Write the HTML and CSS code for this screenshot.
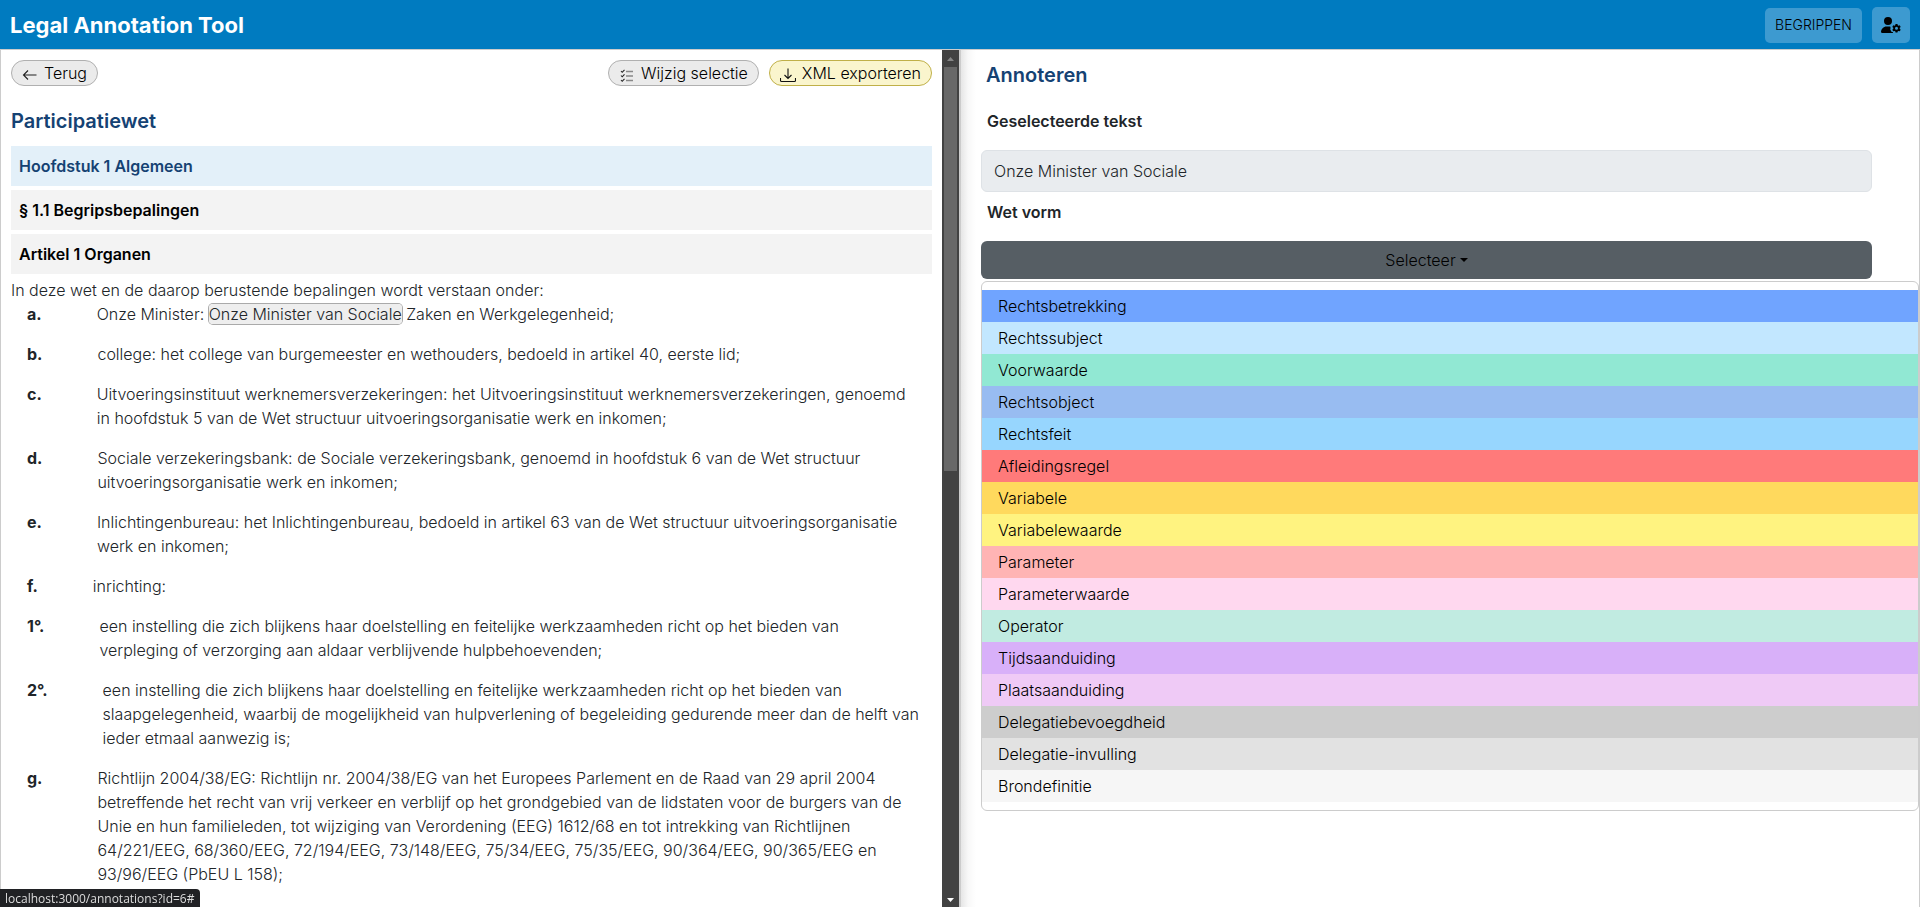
FILE: index.html
```html
<!DOCTYPE html>
<html lang="nl">
<head>
<meta charset="utf-8">
<meta name="viewport" content="width=device-width, initial-scale=1">
<title>Legal Annotation Tool</title>
<link rel="stylesheet" href="styles.css">
</head>
<body>
<header class="topbar">
  <h1 class="brand">Legal Annotation Tool</h1>
  <nav class="topbar-actions">
    <button type="button" class="nav-button nav-button-text">BEGRIPPEN</button>
    <button type="button" class="nav-button nav-button-icon" aria-label="Gebruikersinstellingen">
      <svg width="20" height="16" viewBox="0 0 640 512" aria-hidden="true">
        <path d="M224 0a128 128 0 1 1 0 256A128 128 0 1 1 224 0zM178 304h92c9 0 18 .7 27 2-2 10-1 20 4 29l10 17c-14 12-20 32-14 50 8 24 20 45 38 66 12 14 30 19 46 13v28c0 1 0 2 0 3H30c-17 0-30-13-30-30C0 384 80 304 178 304z"/>
        <path fill-rule="evenodd" d="M466 222h60l11 42 20 12 43-12 30 52-31 31v26l31 31-30 52-43-12-20 12-11 43h-60l-11-43-20-12-43 12-30-52 31-31v-26l-31-31 30-52 43 12 20-12zM496 312a48 48 0 1 0 0 96 48 48 0 1 0 0-96z"/>
      </svg>
    </button>
  </nav>
</header>
<div class="workspace">
  <section class="pane pane-law">
    <div class="law-content">
      <div class="toolbar">
        <button type="button" class="pill">
          <svg width="16" height="16" viewBox="0 0 16 16" aria-hidden="true"><path d="M14.500 8H1.500M6 3.500L1.500 8 6 12.500" fill="none" stroke="#222" stroke-width="1.100"/></svg>
          <span>Terug</span>
        </button>
        <div class="toolbar-end">
          <button type="button" class="pill">
            <svg width="16" height="16" viewBox="0 0 16 16" aria-hidden="true"><path d="M7 4.500h7M7 9h7M7 13.500h7" fill="none" stroke="#888" stroke-width="1.300"/><path d="M2 4l1.200 1.300L5.500 2.800M2 8.500l1.200 1.300 2.300-2.500M2 13l1.200 1.300 2.300-2.500" fill="none" stroke="#222" stroke-width="1.100"/></svg>
            <span>Wijzig selectie</span>
          </button>
          <button type="button" class="pill pill-export">
            <svg width="16" height="16" viewBox="0 0 16 16" aria-hidden="true"><path d="M.5 11v2.500q0 1 1 1h13q1 0 1-1V11M8 1.500v10M4.500 8L8 11.500 11.500 8" fill="none" stroke="#111" stroke-width="1.100"/></svg>
            <span>XML exporteren</span>
          </button>
        </div>
      </div>
      <h2 class="title">Participatiewet</h2>
      <h3 class="bar bar-chapter">Hoofdstuk 1 Algemeen</h3>
      <h3 class="bar">§ 1.1 Begripsbepalingen</h3>
      <h3 class="bar">Artikel 1 Organen</h3>
      <p class="intro">In deze wet en de daarop berustende bepalingen wordt verstaan onder:</p>
      <ul class="items">
        <li><b>a.</b><span>Onze Minister: <mark>Onze Minister van Sociale</mark> Zaken en Werkgelegenheid;</span></li>
        <li><b>b.</b><span>college: het college van burgemeester en wethouders, bedoeld in artikel 40, eerste lid;</span></li>
        <li><b>c.</b><span>Uitvoeringsinstituut werknemersverzekeringen: het Uitvoeringsinstituut werknemersverzekeringen, genoemd in hoofdstuk 5 van de Wet structuur uitvoeringsorganisatie werk en inkomen;</span></li>
        <li><b>d.</b><span>Sociale verzekeringsbank: de Sociale verzekeringsbank, genoemd in hoofdstuk 6 van de Wet structuur uitvoeringsorganisatie werk en inkomen;</span></li>
        <li><b>e.</b><span>Inlichtingenbureau: het Inlichtingenbureau, bedoeld in artikel 63 van de Wet structuur uitvoeringsorganisatie werk en inkomen;</span></li>
        <li><b>f.</b><span>inrichting:</span></li>
        <li><b>1°.</b><span>een instelling die zich blijkens haar doelstelling en feitelijke werkzaamheden richt op het bieden van verpleging of verzorging aan aldaar verblijvende hulpbehoevenden;</span></li>
        <li><b>2°.</b><span>een instelling die zich blijkens haar doelstelling en feitelijke werkzaamheden richt op het bieden van slaapgelegenheid, waarbij de mogelijkheid van hulpverlening of begeleiding gedurende meer dan de helft van ieder etmaal aanwezig is;</span></li>
        <li><b>g.</b><span>Richtlijn 2004/38/EG: Richtlijn nr. 2004/38/EG van het Europees Parlement en de Raad van 29 april 2004 betreffende het recht van vrij verkeer en verblijf op het grondgebied van de lidstaten voor de burgers van de Unie en hun familieleden, tot wijziging van Verordening (EEG) 1612/68 en tot intrekking van Richtlijnen 64/221/EEG, 68/360/EEG, 72/194/EEG, 73/148/EEG, 75/34/EEG, 75/35/EEG, 90/364/EEG, 90/365/EEG en 93/96/EEG (PbEU L 158);</span></li>
      </ul>
    </div>
    <div class="scrollbar" aria-hidden="true">
      <span class="arrow arrow-up"></span>
      <div class="track"><div class="thumb"></div></div>
      <span class="arrow arrow-down"></span>
    </div>
  </section>
  <section class="pane pane-annotate">
    <h2 class="title">Annoteren</h2>
    <label class="field-label" for="selected">Geselecteerde tekst</label>
    <input class="field" id="selected" type="text" value="Onze Minister van Sociale" readonly>
    <span class="field-label" id="form-label">Wet vorm</span>
    <div class="dropdown">
      <button type="button" class="toggle" aria-expanded="true" aria-describedby="form-label">Selecteer<span class="caret"></span></button>
      <div class="menu">
        <a href="#" class="c-betrekking">Rechtsbetrekking</a>
        <a href="#" class="c-subject">Rechtssubject</a>
        <a href="#" class="c-voorwaarde">Voorwaarde</a>
        <a href="#" class="c-object">Rechtsobject</a>
        <a href="#" class="c-feit">Rechtsfeit</a>
        <a href="#" class="c-afleiding">Afleidingsregel</a>
        <a href="#" class="c-variabele">Variabele</a>
        <a href="#" class="c-variabelewaarde">Variabelewaarde</a>
        <a href="#" class="c-parameter">Parameter</a>
        <a href="#" class="c-parameterwaarde">Parameterwaarde</a>
        <a href="#" class="c-operator">Operator</a>
        <a href="#" class="c-tijd">Tijdsaanduiding</a>
        <a href="#" class="c-plaats">Plaatsaanduiding</a>
        <a href="#" class="c-bevoegdheid">Delegatiebevoegdheid</a>
        <a href="#" class="c-invulling">Delegatie-invulling</a>
        <a href="#" class="c-bron">Brondefinitie</a>
      </div>
    </div>
  </section>
</div>
<div class="status">localhost:3000/annotations?id=6#</div>
</body>
</html>
```
FILE: styles.css
```css
* { box-sizing: border-box; }
body {
  margin: 0;
  height: 100vh;
  display: flex;
  flex-direction: column;
  overflow: hidden;
  font: 300 16px/24px Inter, sans-serif;
  color: #212529;
  background: #fff;
}
h1, h2, h3, p, ul { margin: 0; padding: 0; }
button, input { font: inherit; color: inherit; }
.topbar {
  display: flex;
  align-items: center;
  justify-content: space-between;
  padding: 7px 10px 6px;
  background: #007bc0;
}
.brand { font-size: 22px; font-weight: 700; color: #fff; }
.topbar-actions { display: flex; align-items: center; gap: 10px; }
.nav-button {
  display: flex;
  align-items: center;
  border: 0;
  border-radius: 5px;
  padding: 0 10px;
  background: #3d9ad0;
  color: #000;
}
.nav-button-text { height: 35px; font-size: 14px; }
.nav-button-icon { height: 36px; width: 38px; padding: 0 9px; }
.workspace { flex: 1; min-height: 0; display: grid; grid-template-columns: 1fr 1fr; }
.pane { min-width: 0; min-height: 0; border: 1px solid #ccc; border-bottom: 0; }
.pane-law { display: flex; overflow: hidden; }
.law-content { flex: 1; min-width: 0; padding: 10px; }
.toolbar, .toolbar-end { display: flex; justify-content: space-between; gap: 10px; }
.pill {
  display: flex;
  align-items: center;
  gap: 6px;
  height: 26px;
  padding: 0 10px;
  border: 1px solid #b0b0b0;
  border-radius: 13px;
  background: #ebebeb;
  color: #000;
}
.pill svg { margin-top: 3px; }
.pill-export { border-color: #c0b048; background: #faf5cd; }
.title { font-size: 20px; font-weight: 600; color: #154273; }
.law-content .title { margin: 23px 0 13px; }
.bar {
  margin-bottom: 4px;
  padding: 8px;
  font-size: 16px;
  font-weight: 600;
  color: #000;
  background: #f3f3f3;
}
.bar-chapter { color: #154273; background: #e3f0f9; }
.items { list-style: none; padding: 0 10px 0 16px; }
.items li { display: flex; gap: 55px; margin-bottom: 16px; }
.items b { font-weight: 700; }
mark { color: inherit; background: #eee; border-radius: 4px; box-shadow: 0 0 0 1px #aaa; }
.scrollbar {
  width: 17px;
  display: flex;
  flex-direction: column;
  align-items: center;
  justify-content: space-between;
  background: #424242;
}
.track { flex: 1; width: 13px; }
.thumb { height: 49%; background: #686868; }
.arrow { width: 7px; height: 4px; margin: 7px 0 6px; }
.arrow-up { background: #868686; clip-path: polygon(50% 0, 100% 100%, 0 100%); }
.arrow-down { background: #fff; clip-path: polygon(0 0, 100% 0, 50% 100%); margin: 6px 0 5px; }
.pane-annotate {
  display: flex;
  flex-direction: column;
  padding: 13px 47px 0 20px;
  background: linear-gradient(to right, #e6e6e6, #f8f8f8 7px, #fff 15px);
}
.pane-annotate .title { padding-left: 5px; margin-bottom: 22px; }
.field-label { padding-left: 6px; margin-bottom: 17px; font-weight: 600; }
.field {
  height: 42px;
  width: 100%;
  padding: 0 12px;
  margin-bottom: 8px;
  border: 1px solid #dee2e6;
  border-radius: 6px;
  background: #e9ecef;
}
.dropdown { position: relative; }
.toggle {
  display: flex;
  align-items: center;
  justify-content: center;
  gap: 4px;
  width: 100%;
  height: 38px;
  border: 0;
  border-radius: 6px;
  background: #565e64;
  color: #000;
}
.caret { border: 4px solid transparent; border-top-color: #000; border-bottom: 0; }
.menu {
  position: absolute;
  top: 40px;
  left: 0;
  right: -47px;
  padding: 8px 0;
  border: 1px solid #ccc;
  border-radius: 6px;
  background: #fff;
}
.menu a { display: block; padding: 4px 16px; color: #000; text-decoration: none; }
.c-betrekking { background: #70a4ff; }
.c-subject { background: #c2e7ff; }
.c-voorwaarde { background: #91e8d3; }
.c-object { background: #98bcf1; }
.c-feit { background: #97d6fe; }
.c-afleiding { background: #ff7a7a; }
.c-variabele { background: #ffd95d; }
.c-variabelewaarde { background: #fff380; }
.c-parameter { background: #ffb4b4; }
.c-parameterwaarde { background: #ffd8ef; }
.c-operator { background: #c1ebe1; }
.c-tijd { background: #d8b0f9; }
.c-plaats { background: #efcaf6; }
.c-bevoegdheid { background: #cdcdcd; }
.c-invulling { background: #e2e2e2; }
.c-bron { background: #f6f6f6; }
.status {
  position: fixed;
  left: 0;
  bottom: 0;
  padding: 1px 6px 0 5px;
  border-top-right-radius: 4px;
  background: #202124;
  color: #ddd;
  font: 400 12px/17px "Open Sans", sans-serif;
}
```
